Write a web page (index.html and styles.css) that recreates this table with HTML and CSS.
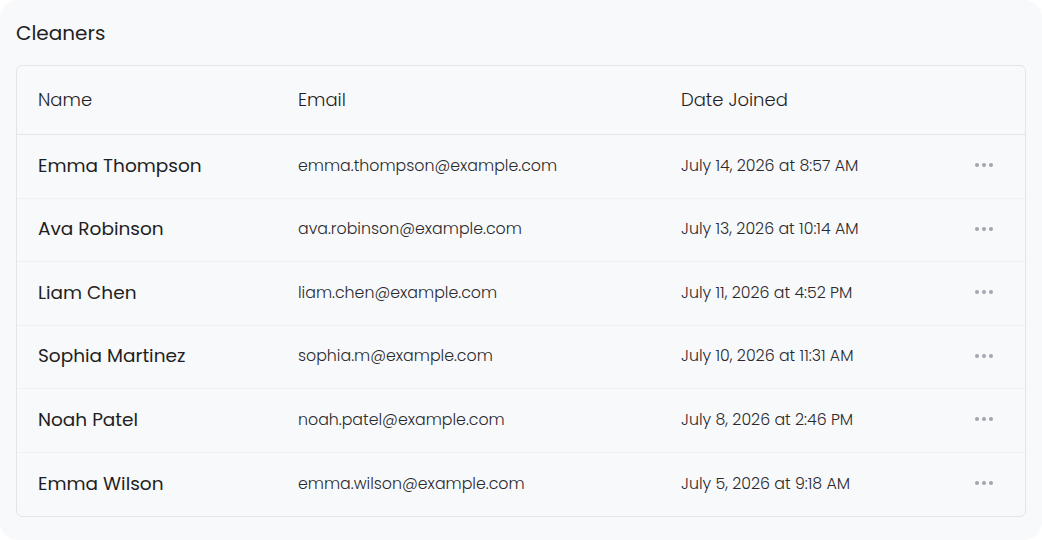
FILE: index.html
```html
<!DOCTYPE html>
<html lang="en">
<head>
    <meta charset="UTF-8">
    <meta name="viewport" content="width=device-width, initial-scale=1.0">
    <title>Cleaners</title>
    <link rel="stylesheet" href="styles.css">
</head>
<body>

    <!-- Cleaners panel -->
    <div class="panel">
        <h2 class="panel-title">Cleaners</h2>

        <div class="table">
            <div class="row head">
                <div class="cell">Name</div>
                <div class="cell">Email</div>
                <div class="cell">Date Joined</div>
                <div class="cell"></div>
            </div>

            <div class="row">
                <div class="cell name">Emma Thompson</div>
                <div class="cell">emma.thompson@example.com</div>
                <div class="cell">July 14, 2026 at 8:57 AM</div>
                <div class="cell"><span class="more"><i></i><i></i><i></i></span></div>
            </div>
            <div class="row">
                <div class="cell name">Ava Robinson</div>
                <div class="cell">ava.robinson@example.com</div>
                <div class="cell">July 13, 2026 at 10:14 AM</div>
                <div class="cell"><span class="more"><i></i><i></i><i></i></span></div>
            </div>
            <div class="row">
                <div class="cell name">Liam Chen</div>
                <div class="cell">liam.chen@example.com</div>
                <div class="cell">July 11, 2026 at 4:52 PM</div>
                <div class="cell"><span class="more"><i></i><i></i><i></i></span></div>
            </div>
            <div class="row">
                <div class="cell name">Sophia Martinez</div>
                <div class="cell">sophia.m@example.com</div>
                <div class="cell">July 10, 2026 at 11:31 AM</div>
                <div class="cell"><span class="more"><i></i><i></i><i></i></span></div>
            </div>
            <div class="row">
                <div class="cell name">Noah Patel</div>
                <div class="cell">noah.patel@example.com</div>
                <div class="cell">July 8, 2026 at 2:46 PM</div>
                <div class="cell"><span class="more"><i></i><i></i><i></i></span></div>
            </div>
            <div class="row">
                <div class="cell name">Emma Wilson</div>
                <div class="cell">emma.wilson@example.com</div>
                <div class="cell">July 5, 2026 at 9:18 AM</div>
                <div class="cell"><span class="more"><i></i><i></i><i></i></span></div>
            </div>
        </div>
    </div>

</body>
</html>
```

FILE: styles.css
```css
* {
    margin: 0;
    padding: 0;
    box-sizing: border-box;
}

body {
    background-color: #fff;
    font-family: "Poppins", Inter, "Noto Sans", sans-serif;
    color: #1f1f23;
    overflow: hidden;
}

.panel {
    width: 1042px;
    height: 540px;
    background-color: #f8f9fb;
    border-radius: 18px;
    padding: 18px 16px 0 16px;
}

.panel-title {
    font-size: 20px;
    font-weight: 400;
    line-height: 30px;
    color: #1f1f23;
    margin-bottom: 17px;
}

.table {
    border: 1px solid #e3e5e9;
    border-radius: 6px;
}

.row {
    display: grid;
    grid-template-columns: 260px 383px 1fr 72px;
    align-items: center;
    height: 63.5px;
    padding-bottom: 2px;
    border-bottom: 1px solid #eef0f3;
}

.row:last-child {
    border-bottom: none;
}

.row.head {
    height: 69px;
    padding-bottom: 2px;
    border-bottom: 1px solid #e3e5e9;
}

.cell {
    padding: 0 21px;
    font-size: 15.8px;
    font-weight: 300;
    color: #2a2a2e;
    white-space: nowrap;
}

.head .cell {
    font-size: 18px;
    font-weight: 300;
    color: #1f1f23;
}

.cell.name {
    font-size: 18.5px;
    font-weight: 400;
    color: #1f1f23;
}

.more {
    display: flex;
    gap: 3px;
    padding-left: 1px;
}

.more i {
    width: 4px;
    height: 4px;
    border-radius: 50%;
    background-color: #a3a6ad;
}
```
